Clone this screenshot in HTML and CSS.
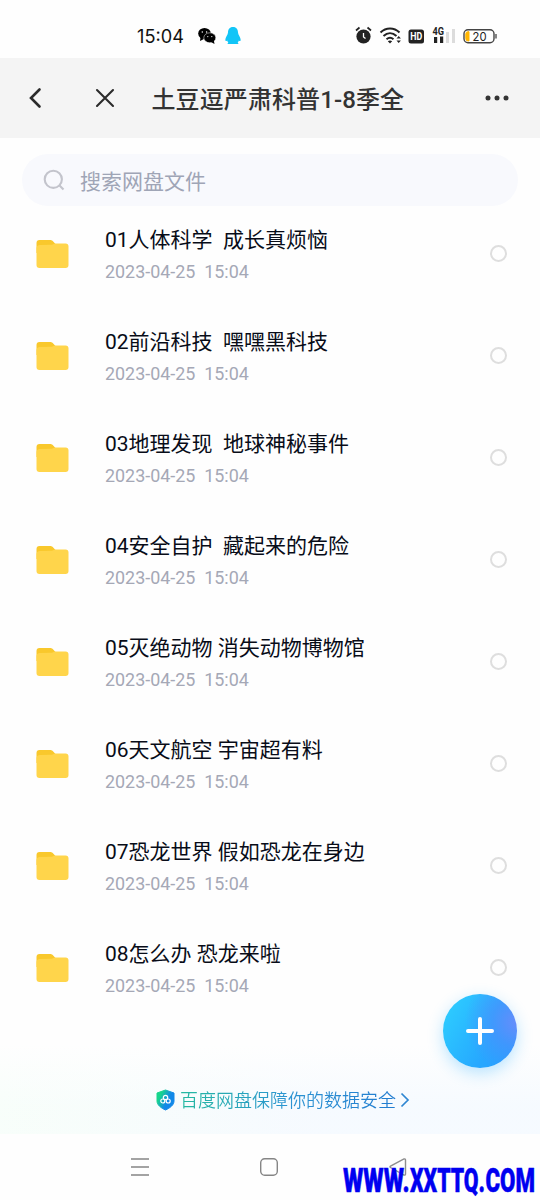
FILE: index.html
```
<!DOCTYPE html>
<html lang="zh-CN">
<head>
<meta charset="utf-8">
<title>土豆逗严肃科普1-8季全</title>
<link rel="stylesheet" href="styles.css">
</head>
<body>
<div class="screen">
  <div class="status">
    <span class="clock">15:04</span>
    <svg class="apps" width="46" height="22" viewBox="0 0 46 22">
      <ellipse cx="6.500" cy="8.500" rx="6.300" ry="5.600"/><path d="M2.500 12l-.5 4 4-2z"/>
      <ellipse cx="11.800" cy="12.800" rx="6" ry="5" stroke="#fff" stroke-width=".5"/><path d="M13 17l3.500 2-.7-3.500z"/>
      <g fill="#fff"><circle cx="4.300" cy="7" r=".7"/><circle cx="8.600" cy="7" r=".7"/><circle cx="9.800" cy="11.600" r=".6"/><circle cx="13.800" cy="11.600" r=".6"/></g>
      <path fill="#12c5f7" d="M35 2c-3.600 0-5 2.700-5 5.400 0 2.400-2.700 4.600-2.700 7.600 0 1.400 1 1.400 1.900.4.200.9.600 1.600 1.200 2.200-.9.500-1.300 1.400-.3 1.400h9.800c1 0 .6-.9-.3-1.400.600-.6 1-1.300 1.200-2.200.9 1 1.900 1 1.900-.4 0-3-2.700-5.200-2.700-7.600C40 4.700 38.600 2 35 2z"/>
    </svg>
    <svg class="signals" width="144" height="22" viewBox="0 0 144 22">
      <circle cx="8.500" cy="11.500" r="7.100" fill="#222"/><path d="M1 5.500l3.500-3M16 5.500l-3.500-3" stroke="#222" stroke-width="1.700"/><path d="M8.500 8v4l2 1.500" fill="none" stroke="#fff" stroke-width="1.300"/>
      <g fill="none" stroke="#222" stroke-width="2"><path d="M25.500 7.500c5.500-5.300 13.500-5.300 19 0M28.500 11c4-3.700 9-3.700 13 0M31.500 14.200c2.300-2 4.700-2 7 0"/></g>
      <path d="M32.800 16.200q2.200-1.500 4.400 0L35 18.600zM41.500 13.500l2.200-2.500 2.200 2.500zM41.500 15.500l2.200 2.500 2.200-2.500z" fill="#222"/>
      <rect x="53.500" y="4.500" width="15.500" height="14" rx="2.500" fill="#222"/><text class="hd" x="55.300" y="15.200" textLength="12" lengthAdjust="spacingAndGlyphs">HD</text>
      <text class="g4" x="77.500" y="9.500" textLength="11.500" lengthAdjust="spacingAndGlyphs">4G</text>
      <path d="M79 12h3.200v6H79zM85 11.500h3.200V18H85z" fill="#222"/><path d="M91 7h3v11h-3zM97 4h3v14h-3z" fill="#dcdcdc"/>
      <rect x="109" y="4.800" width="30" height="13" rx="4" fill="none" stroke="#444" stroke-width="1.400"/><path d="M114 6.700v9.200h-1a2.200 2.200 0 0 1-2.200-2.200V8.900A2.200 2.200 0 0 1 113 6.700z" fill="#ffb500" stroke="#ffb500"/><path d="M141 9v4.500" stroke="#444" stroke-width="1.300"/>
      <text class="charge" x="117.500" y="15.500" textLength="14" lengthAdjust="spacingAndGlyphs">20</text>
    </svg>
  </div>
  <div class="header">
    <svg class="back" width="16" height="22" viewBox="0 0 16 22"><path d="M11.500 2.500L3 11l8.500 8.500" fill="none" stroke="#2b2b2b" stroke-width="2.600" stroke-linecap="round"/></svg>
    <svg class="close" width="22" height="22" viewBox="0 0 22 22"><path d="M3 3l16 16M19 3L3 19" stroke="#2b2b2b" stroke-width="2.100" stroke-linecap="round"/></svg>
    <h1 class="title">土豆逗严肃科普1-8季全</h1>
    <svg class="more" width="24" height="6" viewBox="0 0 24 6" fill="#333"><circle cx="3" cy="3" r="2.500"/><circle cx="12" cy="3" r="2.500"/><circle cx="21" cy="3" r="2.500"/></svg>
  </div>
  <div class="search">
    <svg width="24" height="24" viewBox="0 0 24 24" fill="none" stroke="#c3c4cc" stroke-width="2.100"><circle cx="11.300" cy="11.300" r="8.600"/><path d="M17.300 17.300l4.200 4.200"/></svg>
    <span>搜索网盘文件</span>
  </div>
  <svg class="defs" width="0" height="0">
    <symbol id="folder" viewBox="0 0 32 28"><path d="M0 13V3a3 3 0 0 1 3-3h10.500c1.500 0 2.300.5 3.200 1.500L19 4l2 9z" fill="#f9c82c"/><path d="M0 8.500A3.500 3.500 0 0 1 3.500 5l12-.2 3-1.300H29a3 3 0 0 1 3 3V25a3 3 0 0 1-3 3H3a3 3 0 0 1-3-3z" fill="#ffd54b"/></symbol>
  </svg>
  <div class="list">
    <div class="row"><svg class="folder"><use href="#folder"/></svg><div class="info"><div class="name">01人体科学  成长真烦恼</div><div class="date">2023-04-25  15:04</div></div><i class="check"></i></div>
    <div class="row"><svg class="folder"><use href="#folder"/></svg><div class="info"><div class="name">02前沿科技  嘿嘿黑科技</div><div class="date">2023-04-25  15:04</div></div><i class="check"></i></div>
    <div class="row"><svg class="folder"><use href="#folder"/></svg><div class="info"><div class="name">03地理发现  地球神秘事件</div><div class="date">2023-04-25  15:04</div></div><i class="check"></i></div>
    <div class="row"><svg class="folder"><use href="#folder"/></svg><div class="info"><div class="name">04安全自护  藏起来的危险</div><div class="date">2023-04-25  15:04</div></div><i class="check"></i></div>
    <div class="row"><svg class="folder"><use href="#folder"/></svg><div class="info"><div class="name">05灭绝动物 消失动物博物馆</div><div class="date">2023-04-25  15:04</div></div><i class="check"></i></div>
    <div class="row"><svg class="folder"><use href="#folder"/></svg><div class="info"><div class="name">06天文航空 宇宙超有料</div><div class="date">2023-04-25  15:04</div></div><i class="check"></i></div>
    <div class="row"><svg class="folder"><use href="#folder"/></svg><div class="info"><div class="name">07恐龙世界 假如恐龙在身边</div><div class="date">2023-04-25  15:04</div></div><i class="check"></i></div>
    <div class="row"><svg class="folder"><use href="#folder"/></svg><div class="info"><div class="name">08怎么办 恐龙来啦</div><div class="date">2023-04-25  15:04</div></div><i class="check"></i></div>
  </div>
  <div class="safety">
    <svg width="19" height="22" viewBox="0 0 19 22"><defs><linearGradient id="shield" x1="0" y1="0" x2="1" y2=".6"><stop offset=".25" stop-color="#16d58c"/><stop offset=".7" stop-color="#1188e8"/></linearGradient></defs><path d="M9.500 1l8.500 3v8c0 4-4 7-8.500 9C5 19 1 16 1 12V4z" fill="url(#shield)" stroke="url(#shield)" stroke-linejoin="round"/><g fill="none" stroke="#fff" stroke-width="1.200"><circle cx="9.500" cy="8.500" r="2.200"/><circle cx="6.800" cy="12" r="2"/><circle cx="12.200" cy="12" r="2"/></g></svg>
    <span class="promise">百度网盘保障你的数据安全</span>
    <svg width="10" height="16" viewBox="0 0 10 16"><path d="M1.500 1.500L8 8l-6.500 6.500" fill="none" stroke="#2f86d2" stroke-width="1.700"/></svg>
  </div>
  <div class="nav">
    <svg width="20" height="20" viewBox="0 0 20 20" stroke="#858585" stroke-width="1.400"><path d="M1 2h18M1 10h18M1 18h18"/></svg>
    <svg width="20" height="20" viewBox="0 0 20 20" fill="none" stroke="#858585" stroke-width="1.400"><rect x="1.700" y="1.700" width="16.600" height="16.600" rx="4"/></svg>
    <svg width="20" height="20" viewBox="0 0 20 20" fill="none" stroke="#8d8d8d" stroke-width="1.400"><path d="M17.500 3v14q0 1.500-1.500 1L2.500 10.500q-1-.7 0-1.300L16 2q1.500-.5 1.500 1z"/></svg>
  </div>
  <div class="add"><svg width="28" height="28" viewBox="0 0 28 28"><path d="M14 2v24M2 14h24" stroke="#fff" stroke-width="4" stroke-linecap="round"/></svg></div>
  <svg class="mark" width="200" height="44" viewBox="0 0 200 44">
    <text x="3" y="35.500" textLength="66.500" lengthAdjust="spacingAndGlyphs">WWW.</text>
    <text x="70" y="35.500" textLength="75" lengthAdjust="spacingAndGlyphs">XXTTQ.</text>
    <text x="145.500" y="35.500" textLength="49.500" lengthAdjust="spacingAndGlyphs">COM</text>
  </svg>
</div>
</body>
</html>
```
FILE: styles.css
```
body { margin: 0; background: #fff; font-family: Roboto, "Noto Sans CJK SC", sans-serif; }
svg { display: block; flex: none; }
.screen { position: relative; width: 540px; height: 1200px; overflow: hidden; background: #fefefe; }
.status { box-sizing: border-box; height: 58px; padding: 14px 0 0 137px; display: flex; align-items: center; }
.clock { width: 60px; font: 400 18.2px Inter, sans-serif; color: #111; }
.apps { margin-left: 1px; }
.signals { margin-left: 111px; }
.hd { font: bold 10.5px Roboto, sans-serif; fill: #fff; }
.g4 { font: bold 10.5px Roboto, sans-serif; fill: #222; }
.charge { font: 12px Inter, sans-serif; fill: #222; }
.header { height: 80px; display: flex; align-items: center; background: #f4f4f4; color: #333; }
.back { margin-left: 27.5px; }
.close { margin-left: 50px; }
.title { margin: 3px 0 0 36px; width: 333px; font-size: 24px; line-height: 36px; font-weight: 500; letter-spacing: .1px; white-space: nowrap; }
.search { box-sizing: border-box; margin: 16px 22px 0; height: 52px; border-radius: 26px; padding-left: 20px; display: flex; align-items: center; gap: 14px; background: #f8f9fd; color: #9fa5b6; font-size: 21px; }
.search span { line-height: 30px; padding-top: 3px; }
.defs { position: absolute; }
.row { box-sizing: border-box; height: 102px; padding: 19px 33px 0 36px; display: flex; align-items: flex-start; }
.folder { width: 33px; height: 28px; margin-top: 14.5px; }
.info { margin-left: 36px; flex: 1; white-space: pre; }
.name { font-size: 21px; line-height: 30px; color: #080c18; }
.date { margin-top: 3px; font-size: 17.9px; line-height: 28px; color: #a5a8b6; }
.check { box-sizing: border-box; width: 17px; height: 17px; margin-top: 20px; border: 2px solid #dedede; border-radius: 50%; }
.safety { box-sizing: border-box; height: 112px; padding: 67px 0 0 156px; display: flex; align-items: flex-start; background: linear-gradient(180deg, #fefefe 20%, rgba(254,254,254,.1) 75%), linear-gradient(90deg, #f7fefa, #f5faff 60%); }
.promise { margin: -2px 4px 0 5px; font-size: 18px; line-height: 27px; font-weight: 350; color: transparent; background: linear-gradient(90deg, #25b9a0, #2c94d2 50%, #227cd0); background-clip: text; -webkit-background-clip: text; }
.promise + svg { margin-top: 3px; }
.nav { display: flex; gap: 109px; padding: 23px 0 0 130px; }
.add { position: absolute; left: 443px; top: 993.5px; width: 74px; height: 74px; border-radius: 50%; display: flex; align-items: center; justify-content: center; background: radial-gradient(circle at 100% 38%, #668dfb 0, rgba(74,145,252,.7) 28%, rgba(40,170,255,0) 60%), linear-gradient(120deg, #2dcbff 10%, #26a8ff 65%, #269cff); box-shadow: 0 5px 16px rgba(40,175,255,.32); }
.mark { position: absolute; left: 340px; top: 1156px; }
.mark text { font: 900 33px Roboto, sans-serif; fill: #0000f0; stroke: #0000f0; stroke-width: .5px; }
```
